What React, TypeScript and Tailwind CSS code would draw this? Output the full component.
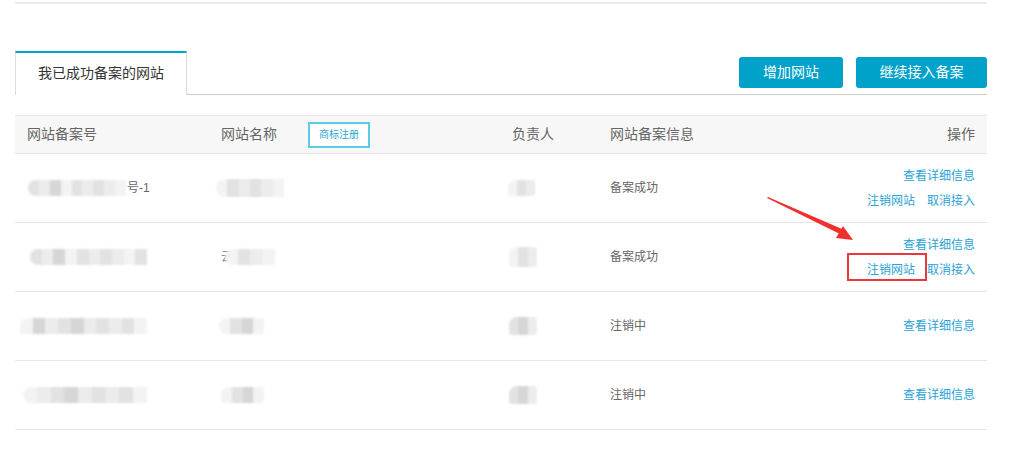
import React from "react";

const FONT = '"Liberation Sans", "Noto Sans CJK SC", sans-serif';

const Blur = ({ w, h = 16, ml = 0, cells, round = true }: { w: number; h?: number; ml?: number; cells: string[]; round?: boolean }) => (
  <div
    className={round ? "flex overflow-hidden rounded-l-full rounded-r-[6px] blur-[0.8px]" : "flex overflow-hidden rounded-tl-[8px] rounded-[3px] blur-[0.8px]"}
    style={{ width: w, height: h, marginLeft: ml }}
  >
    {cells.map((c, i) => (
      <div key={i} className="flex-1 h-full" style={{ background: c }} />
    ))}
  </div>
);

const A = "#ececec";
const B = "#e2e2e2";
const C = "#d6d6d6";
const D = "#f3f3f3";

type Row = {
  c1: React.ReactNode;
  c2: React.ReactNode;
  c3: React.ReactNode;
  status: string;
  full: boolean;
  boxed?: boolean;
};

const rows: Row[] = [
  {
    c1: (
      <div className="flex items-center">
        <Blur w={98} ml={1} cells={[B, A, C, D, B, A, B, A, D]} />
        <span className="text-[12px] text-[#666] ml-[1px]">号-1</span>
      </div>
    ),
    c2: <Blur w={68} h={18} ml={-5} cells={[D, B, A, B, A, D]} />,
    c3: <Blur w={27} ml={-4} round={false} cells={[D, B, A]} />,
    status: "备案成功",
    full: true,
  },
  {
    c1: <Blur w={117} ml={3} cells={[B, A, C, D, B, A, B, A, D, B]} />,
    c2: (
      <div className="flex items-center">
        <span className="text-[12px] text-[#888]">云</span>
        <Blur w={50} ml={-8} cells={[D, B, A, D]} />
      </div>
    ),
    c3: <Blur w={28} h={20} ml={-3} round={false} cells={[D, B, A]} />,
    status: "备案成功",
    full: true,
    boxed: true,
  },
  {
    c1: <Blur w={127} ml={-7} round={false} cells={[D, C, A, B, C, A, B, A, B, D]} />,
    c2: <Blur w={45} ml={-2} cells={[D, B, C, D]} />,
    c3: <Blur w={28} h={18} ml={-3} round={false} cells={[B, C, A]} />,
    status: "注销中",
    full: false,
  },
  {
    c1: <Blur w={124} ml={-4} cells={[D, A, B, C, A, B, A, B, D]} />,
    c2: <Blur w={43} ml={0} round={false} cells={[D, B, C, D]} />,
    c3: <Blur w={28} h={18} ml={-3} round={false} cells={[B, C, A]} />,
    status: "注销中",
    full: false,
  },
];

export default function App() {
  return (
    <div className="relative w-[1024px] h-[454px] bg-white overflow-hidden" style={{ fontFamily: FONT }}>
      <div className="ml-[15px] w-[972px]">
        <div className="mt-[2px] h-[2px] bg-[#ebebeb]" />

        {/* tab bar */}
        <div className="mt-[47px] flex items-end">
          <div className="w-[172px] h-[44px] border-t-2 border-t-[#00a9d4] border-l border-r border-[#dcdcdc] bg-white flex items-center justify-center text-[14px] text-[#333] pb-[2px]">
            我已成功备案的网站
          </div>
          <div className="flex-1 border-b border-[#cccccc] flex justify-end gap-[13px] pb-[6px]">
            <button className="w-[104px] h-[31px] rounded-[3px] bg-[#00a2ca] text-white text-[14px]">增加网站</button>
            <button className="w-[131px] h-[31px] rounded-[3px] bg-[#00a2ca] text-white text-[14px]">继续接入备案</button>
          </div>
        </div>

        {/* table */}
        <div className="mt-[20px]">
          <div className="grid grid-cols-[194px_291px_98px_1fr_auto] h-[39px] items-center bg-[#f7f7f7] border-t border-b border-[#e6e6e6] text-[14px] text-[#666]">
            <div className="pl-3">网站备案号</div>
            <div className="pl-3 flex items-center">
              <span>网站名称</span>
              <span className="ml-[31px] w-[62px] h-[26px] border-2 border-[#5ccbe4] flex items-center justify-center text-[10px] text-[#2aa7d5] bg-white">
                商标注册
              </span>
            </div>
            <div className="pl-3">负责人</div>
            <div className="pl-3">网站备案信息</div>
            <div className="pr-3 text-right">操作</div>
          </div>

          {rows.map((r, i) => (
            <div
              key={i}
              className="grid grid-cols-[194px_291px_98px_1fr_auto] h-[69px] items-center border-b border-[#e6e6e6]"
            >
              <div className="pl-3">{r.c1}</div>
              <div className="pl-3">{r.c2}</div>
              <div className="pl-3">{r.c3}</div>
              <div className="pl-3 text-[12px] text-[#666]">{r.status}</div>
              <div className="pr-3 text-[12px] text-[#2ba3d5] flex flex-col items-end gap-[7px]">
                {r.full ? (
                  <>
                    <span>查看详细信息</span>
                    <div className="flex gap-[12px]">
                      <span className="relative">
                        注销网站
                        {r.boxed && (
                          <span className="absolute left-[-20px] top-[-8px] w-[80px] h-[28px] border-2 border-[#e8383d]" />
                        )}
                      </span>
                      <span>取消接入</span>
                    </div>
                  </>
                ) : (
                  <span>查看详细信息</span>
                )}
              </div>
            </div>
          ))}
        </div>
      </div>

      {/* annotation arrow */}
      <svg className="absolute left-0 top-0 pointer-events-none" width="1024" height="454">
        <polygon points="767,198 768,197 842,229 840,234" fill="#f0302e" />
        <polygon points="853,240 836,238 843,226" fill="#f0302e" />
      </svg>
    </div>
  );
}
